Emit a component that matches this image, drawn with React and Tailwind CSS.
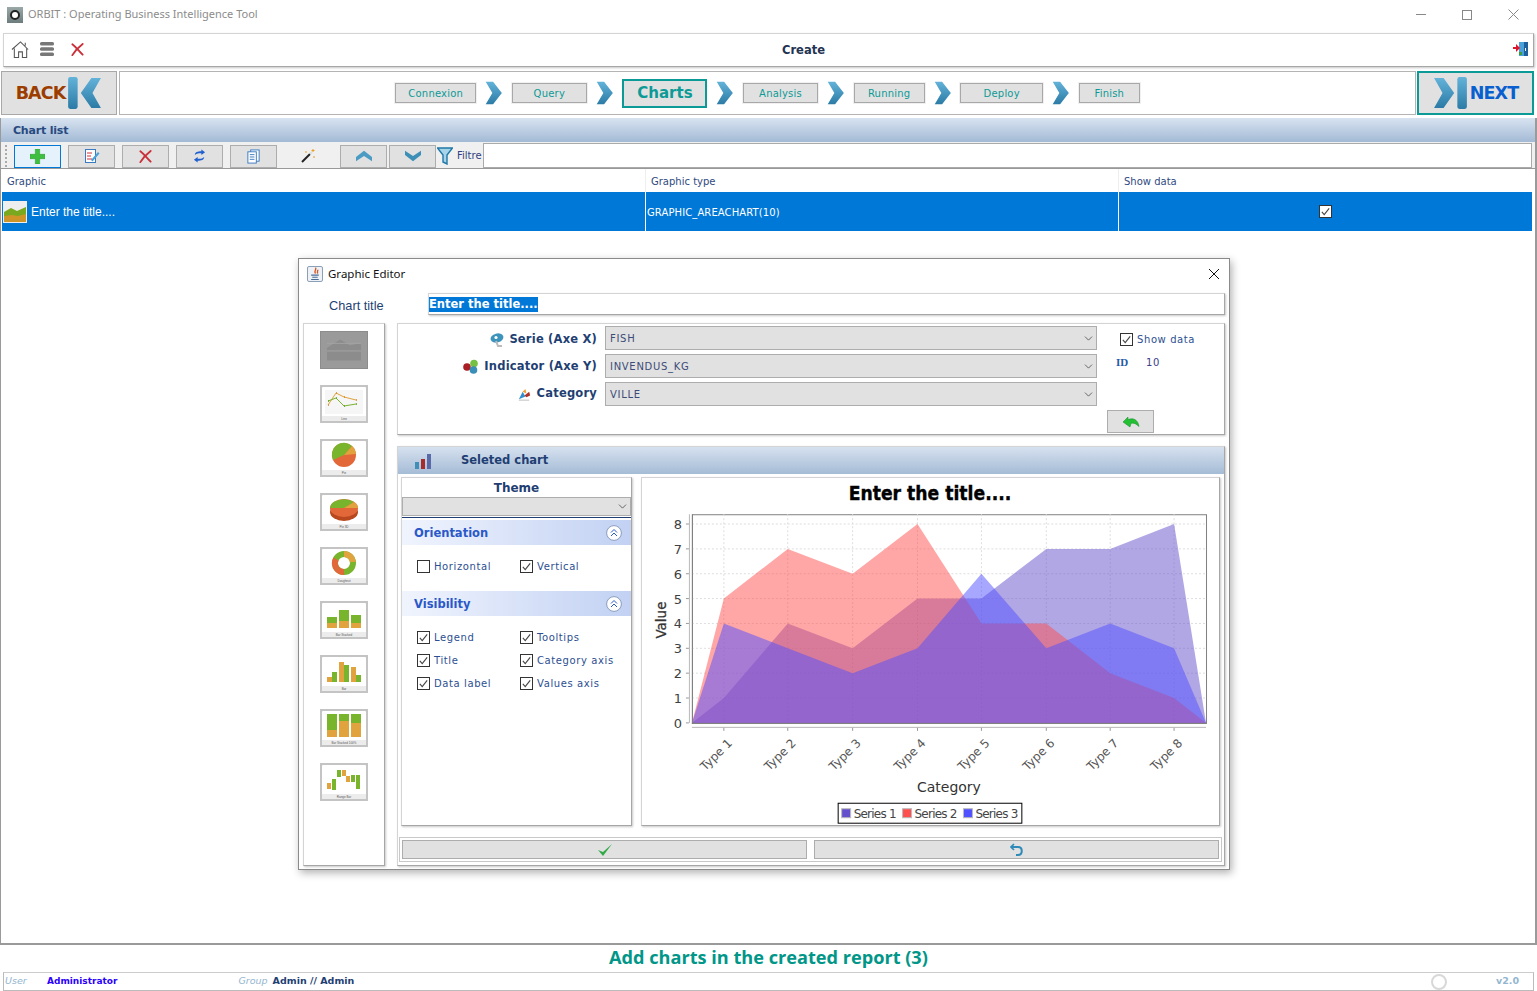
import { ChevronDown } from 'lucide-react';

const VERDANA = "font-['DejaVu_Sans',sans-serif]";

const Raised = ({ className = '', children }) => (
  <div className={`bg-white border border-[#d4d4d4] border-r-[#a6a6a6] border-b-[#a6a6a6] shadow-[1px_1px_2px_rgba(0,0,0,0.22)] ${className}`}>
    {children}
  </div>
);

const Chevron = ({ left = false, bar = false, className = '' }) => (
  <svg viewBox={bar ? '0 0 34 30' : '7 0 24 30'} preserveAspectRatio="none" className={className}>
    <g transform={left ? 'matrix(-1 0 0 1 34 0)' : undefined}>
      <path d={bar ? 'M1 1h9l10 14-10 14H1l8-14z' : 'M8 1h10l12 14-12 14H8l9-14z'} fill="url(#chev)" />
      {bar && <rect x="23" y="0" width="9" height="30" rx="2" fill="url(#chev)" />}
    </g>
  </svg>
);

const RedCross = ({ className = 'w-4 h-4' }) => (
  <svg viewBox="0 0 16 16" className={className}>
    <path d="M2.5 2.5c4 3 7 7 11 11M13.5 2c-4 3-8 7-11 12" fill="none" stroke="#c9303a" strokeWidth="2" strokeLinecap="round" />
  </svg>
);

const StepBox = ({ label }) => (
  <div className={`h-[20px] flex items-center justify-center border border-[#a8a8a8] bg-[#e1e1e1] outline outline-1 outline-[#f0f0f0] text-[10px] tracking-[0.2px] text-[#0c9a96] ${VERDANA}`}>
    {label}
  </div>
);

const ToolBtn = ({ children, active = false, flat = false }) => (
  <div className={`w-[47px] h-[23px] flex items-center justify-center border ${active ? 'border-[#0078d7] bg-[#e5f1fb]' : flat ? 'border-transparent' : 'border-[#adadad] bg-[#e1e1e1]'}`}>
    {children}
  </div>
);

const Check = ({ checked = true, label, className = '' }) => (
  <div className={`flex items-center gap-[4px] ${className}`}>
    <span className="w-[13px] h-[13px] border border-[#333] bg-white flex items-center justify-center shrink-0">
      {checked && (
        <svg viewBox="0 0 12 12" className="w-[11px] h-[11px]">
          <path d="M2 6.5l2.6 3L10 2.5" fill="none" stroke="#444" strokeWidth="1.2" />
        </svg>
      )}
    </span>
    {label && <span className={`text-[10px] tracking-[0.6px] text-[#2c4f92] ${VERDANA}`}>{label}</span>}
  </div>
);

const Combo = ({ value, className = '' }) => (
  <div className={`flex items-center justify-between bg-[#e1e1e1] border border-[#adadad] pl-[4px] pr-[1px] text-[10px] tracking-[0.7px] text-[#3c4c78] ${VERDANA} ${className}`}>
    <span>{value}</span>
    <ChevronDown size={13} strokeWidth={1.3} className="text-[#333]" />
  </div>
);

const AccordionHead = ({ title }) => (
  <div className="h-[25px] flex items-center justify-between pl-[12px] pr-[9px] bg-gradient-to-r from-[#f0f4fd] to-[#c2d1f3]">
    <span className={`pt-[3px] text-[11.5px] font-bold text-[#2a58c8] ${VERDANA}`}>{title}</span>
    <svg viewBox="0 0 16 16" className="w-[16px] h-[16px]">
      <circle cx="8" cy="8" r="7.4" fill="#fff" stroke="#8a9cc0" />
      <path d="M5 7.5l3-3 3 3M5 11l3-3 3 3" fill="none" stroke="#2a58c8" />
    </svg>
  </div>
);

const Frame = ({ label, children }) => (
  <svg viewBox="0 0 48 38" className="w-[48px] h-[38px] block">
    <rect x="0" y="0" width="48" height="38" fill="#c4c4c4" />
    <rect x="2" y="2" width="44" height="34" rx="1" fill="#fff" />
    <rect x="2" y="31" width="44" height="5" fill="#ececec" />
    <text x="24" y="35" textAnchor="middle" fontSize="3" fill="#555" fontFamily="Liberation Sans">{label}</text>
    {children}
  </svg>
);

const barsG = '#79b42d';
const barsO = '#e0a33d';

const thumbs = [
  {
    label: 'Line',
    art: (
      <>
        <rect x="5" y="5" width="38" height="24" fill="#f6f6f6" />
        <path d="M8 20l8-12 8 4 12 3" fill="none" stroke="#e0a33d" />
        <path d="M8 16l8-3 8 8 12-2" fill="none" stroke="#79b42d" />
        <path d="M8 20h1M16 8h1M24 12h1M36 15h1" stroke="#d08a20" strokeWidth="1.5" />
        <path d="M8 16h1M16 13h1M24 21h1M36 19h1" stroke="#5d9a20" strokeWidth="1.5" />
      </>
    ),
  },
  {
    label: 'Pie',
    art: (
      <>
        <circle cx="24" cy="16" r="12" fill="#e2683a" />
        <path d="M24 16L13 21A12 12 0 0 1 32 7z" fill={barsG} />
        <path d="M24 16L32 7A12 12 0 0 1 36 15z" fill={barsO} />
      </>
    ),
  },
  {
    label: 'Pie 3D',
    art: (
      <>
        <ellipse cx="24" cy="19" rx="14" ry="9" fill="#b9481f" />
        <ellipse cx="24" cy="15" rx="14" ry="9" fill="#e2683a" />
        <path d="M24 15L10 15A14 9 0 0 1 34 9z" fill={barsG} />
        <path d="M24 15L34 9A14 9 0 0 1 38 15z" fill={barsO} />
      </>
    ),
  },
  {
    label: 'Doughnut',
    art: (
      <>
        <circle cx="24" cy="16" r="9" fill="none" stroke={barsG} strokeWidth="6" />
        <path d="M24 7A9 9 0 0 1 33 15" fill="none" stroke={barsO} strokeWidth="6" />
        <path d="M17 22A9 9 0 0 1 16 12" fill="none" stroke="#e2683a" strokeWidth="6" />
        <path d="M24 25A9 9 0 0 1 17 22" fill="none" stroke="#e2683a" strokeWidth="6" />
      </>
    ),
  },
  {
    label: 'Bar Stacked',
    art: (
      <>
        <rect x="7" y="16" width="10" height="6" fill={barsG} /><rect x="7" y="22" width="10" height="5" fill={barsO} />
        <rect x="19" y="9" width="10" height="11" fill={barsG} /><rect x="19" y="20" width="10" height="7" fill={barsO} />
        <rect x="31" y="14" width="10" height="8" fill={barsG} /><rect x="31" y="22" width="10" height="5" fill={barsO} />
      </>
    ),
  },
  {
    label: 'Bar',
    art: (
      <>
        <rect x="7" y="22" width="5" height="5" fill={barsO} /><rect x="12" y="17" width="5" height="10" fill={barsG} />
        <rect x="19" y="7" width="5" height="20" fill={barsO} /><rect x="24" y="10" width="5" height="17" fill={barsG} />
        <rect x="31" y="12" width="5" height="15" fill={barsO} /><rect x="36" y="20" width="5" height="7" fill={barsG} />
      </>
    ),
  },
  {
    label: 'Bar Stacked 100%',
    art: (
      <>
        <rect x="7" y="5" width="10" height="16" fill={barsG} /><rect x="7" y="21" width="10" height="7" fill={barsO} />
        <rect x="19" y="5" width="10" height="7" fill={barsG} /><rect x="19" y="12" width="10" height="16" fill={barsO} />
        <rect x="31" y="5" width="10" height="9" fill={barsG} /><rect x="31" y="14" width="10" height="14" fill={barsO} />
      </>
    ),
  },
  {
    label: 'Range Bar',
    art: (
      <>
        <rect x="7" y="20" width="4" height="6" fill={barsO} /><rect x="12" y="16" width="4" height="11" fill={barsG} />
        <rect x="17" y="7" width="4" height="7" fill={barsG} /><rect x="22" y="7" width="4" height="6" fill={barsO} />
        <rect x="26" y="13" width="4" height="6" fill={barsO} /><rect x="31" y="12" width="4" height="7" fill={barsG} />
        <rect x="36" y="12" width="4" height="14" fill={barsG} />
      </>
    ),
  },
];

const X_POS = [724, 788, 853, 918, 982, 1047, 1111, 1175];
const Y0 = 723;
const STEP = 24.9;
const series = [
  { color: '#6450cc', vals: [1, 4, 3, 5, 5, 7, 7, 8] },
  { color: '#ff5050', vals: [5, 7, 6, 8, 4, 4, 2, 1] },
  { color: '#5050ff', vals: [4, 3, 2, 3, 6, 3, 4, 3] },
];

const areaPoints = (vals) =>
  [`692,${Y0}`, ...vals.map((v, i) => `${X_POS[i]},${Y0 - v * STEP}`), `1207,${Y0}`].join(' ');

const Chart = () => (
  <svg viewBox="642 478 578 347" className="w-full h-full block">
    <text x="930.5" y="500" textAnchor="middle" fontSize="20" fontWeight="700" fontFamily="DejaVu Sans" stroke="#000" strokeWidth="0.4" textLength="163" lengthAdjust="spacingAndGlyphs">
      Enter the title....
    </text>
    <rect x="692.5" y="514.5" width="515" height="209" fill="#fff" stroke="#808080" />
    {[1, 2, 3, 4, 5, 6, 7, 8].map((v) => (
      <line key={v} x1="692" x2="1207" y1={Y0 - v * STEP} y2={Y0 - v * STEP} stroke="#ddd" strokeDasharray="2 2" />
    ))}
    {X_POS.map((x) => (
      <line key={x} x1={x} x2={x} y1="514" y2="723" stroke="#ddd" strokeDasharray="2 2" />
    ))}
    {series.map((s) => (
      <polygon key={s.color} points={areaPoints(s.vals)} fill={s.color} fillOpacity="0.5" />
    ))}
    <line x1="692.5" x2="692.5" y1="514" y2="724" stroke="#808080" />
    <line x1="692" x2="1207" y1="723.5" y2="723.5" stroke="#808080" />
    <line x1="692" x2="1207" y1="727.5" y2="727.5" stroke="#b8b8b8" />
    <line x1="689.5" x2="689.5" y1="514" y2="723" stroke="#b8b8b8" />
    {[0, 1, 2, 3, 4, 5, 6, 7, 8].map((v) => (
      <g key={v}>
        <line x1="686" x2="689" y1={Y0 - v * STEP} y2={Y0 - v * STEP} stroke="#999" />
        <text x="682" y={Y0 - v * STEP + 5} textAnchor="end" fontSize="13" fill="#404040" fontFamily="DejaVu Sans">{v}</text>
      </g>
    ))}
    {X_POS.map((x, i) => (
      <g key={x}>
        <line x1={x} x2={x} y1="728" y2="731" stroke="#999" />
        <text x={x + 9} y="744" textAnchor="end" fontSize="12" fill="#555" fontFamily="DejaVu Sans" transform={`rotate(-45 ${x + 9} 744)`}>
          Type {i + 1}
        </text>
      </g>
    ))}
    <text transform="translate(666 620) rotate(-90)" textAnchor="middle" fontSize="13.5" fill="#333" stroke="#333" strokeWidth="0.3" fontFamily="DejaVu Sans">Value</text>
    <text x="949.5" y="792" textAnchor="middle" fontSize="14" fill="#333" fontFamily="DejaVu Sans">Category</text>
    <rect x="838.5" y="803.5" width="184" height="20" fill="#fff" stroke="#000" />
    {[['Series 1', 842, '#6450cc'], ['Series 2', 903, '#ff5050'], ['Series 3', 964, '#5050ff']].map(([t, x, c]) => (
      <g key={t}>
        <rect x={x} y="809" width="9" height="9" fill={c} stroke="#bbb" />
        <text x={x + 12} y="818" fontSize="12" fill="#444" fontFamily="DejaVu Sans" textLength="43">{t}</text>
      </g>
    ))}
  </svg>
);

const GraphicEditor = () => (
  <div className="absolute left-[298px] top-[258px] w-[932px] h-[612px] bg-white border border-[#8a8a8a] shadow-[2px_3px_8px_rgba(0,0,0,0.3)] flex flex-col">
    <div className="h-[29px] shrink-0 flex items-center pl-[8px] pr-[9px]">
      <span className="w-[16px] h-[16px] border border-[#8aa0b8] rounded-[2px] bg-[#eef2f6] flex items-center justify-center mr-[5px]">
        <svg viewBox="0 0 12 12" className="w-[13px] h-[13px]">
          <path d="M6 0.5c1.5 2-2 3 0 5.5M8.2 2.5c0 1.2-1.2 2 0 3.5" fill="none" stroke="#d9531e" strokeWidth="1.2" />
          <path d="M2 7.5h7M3 9.5h5M2 11.5h7" stroke="#4a6d96" fill="none" />
        </svg>
      </span>
      <span className="font-['Noto_Sans',sans-serif] text-[11.5px] text-[#111]">Graphic Editor</span>
      <svg viewBox="0 0 12 12" className="w-[12px] h-[12px] ml-auto">
        <path d="M1 1l10 10M11 1L1 11" stroke="#111" strokeWidth="1" />
      </svg>
    </div>
    <div className="h-[35px] shrink-0 flex items-start pt-[5px]">
      <span className="w-[129px] pl-[30px] pt-[3px] font-['Liberation_Sans',sans-serif] text-[12.75px] text-[#1f3f73]">Chart title</span>
      <Raised className="w-[797px] h-[22px] flex items-center">
        <span className={`bg-[#0078d7] text-white text-[11.5px] font-bold leading-[15px] ${VERDANA}`}>Enter the title....</span>
      </Raised>
    </div>
    <div className="flex-1 flex pl-[4px] pr-[4px] pb-[3px] gap-[12px] min-h-0">
      <Raised className="w-[82px] shrink-0 flex flex-col items-center pt-[7px] gap-[16px]">
        <div className="w-[48px] h-[38px] bg-[#9a9a9a] border border-[#8c8c8c] flex items-center justify-center">
          <svg viewBox="0 0 48 38" className="w-[46px] h-[36px]">
            <path d="M6 30V17l14-9 10 6 12-2v18z" fill="#8c8c8c" />
            <path d="M6 12h36M6 20h36" stroke="#a4a4a4" fill="none" />
          </svg>
        </div>
        {thumbs.map((t) => (
          <Frame key={t.label} label={t.label}>{t.art}</Frame>
        ))}
      </Raised>
      <div className="flex-1 flex flex-col gap-[11px] min-w-0">
        <Raised className="h-[112px] shrink-0 flex">
          <div className="w-[207px] shrink-0 flex flex-col pt-[4px] gap-[3px] items-end pr-[8px]">
            {[['Serie (Axe X)', 'serie'], ['Indicator (Axe Y)', 'ind'], ['Category', 'cat']].map(([t, k]) => (
              <div key={k} className="h-[24px] flex items-center gap-[5px]">
                {k === 'serie' && (
                  <svg viewBox="0 0 14 16" className="w-[14px] h-[16px]">
                    <ellipse cx="7" cy="6" rx="6.5" ry="4.5" fill="#3c94bd" transform="rotate(-15 7 6)" />
                    <circle cx="6" cy="5.5" r="1.6" fill="#fff" />
                    <path d="M6 9l2 5h4" stroke="#bbb" strokeWidth="2" fill="none" />
                  </svg>
                )}
                {k === 'ind' && (
                  <svg viewBox="0 0 16 16" className="w-[16px] h-[16px]">
                    <circle cx="4" cy="8" r="3.8" fill="#a91f24" />
                    <circle cx="11" cy="4.5" r="3.8" fill="#76c043" />
                    <circle cx="10.5" cy="11" r="3.8" fill="#3a8fb8" />
                  </svg>
                )}
                {k === 'cat' && (
                  <svg viewBox="0 0 16 16" className="w-[15px] h-[15px]">
                    <path d="M2 13l4-8 3 5z" fill="#2f8fd0" />
                    <path d="M6 5l3-3 1 5z" fill="#f0a030" />
                    <path d="M8 9l5-4 1 4-4 2z" fill="#b0302a" />
                    <path d="M2 14h11" stroke="#bbb" />
                  </svg>
                )}
                <span className={`text-[11.5px] tracking-[0.2px] font-bold text-[#1f3f73] ${VERDANA}`}>{t}</span>
              </div>
            ))}
          </div>
          <div className="w-[492px] shrink-0 flex flex-col pt-[2px] gap-[4px]">
            <Combo value="FISH" className="h-[24px]" />
            <Combo value="INVENDUS_KG" className="h-[24px]" />
            <Combo value="VILLE" className="h-[24px]" />
          </div>
          <div className="flex-1 flex flex-col pl-[10px]">
            <Check label="Show data" className="pl-[13px] pt-[8px]" />
            <div className="flex items-center mt-[7px] pl-[9px] text-[10px]">
              <span className="font-['Liberation_Serif',serif] font-bold text-[11px] text-[#1f5aa8] w-[30px]">ID</span>
              <span className={`tracking-[0.7px] text-[#3c3c88] ${VERDANA}`}>10</span>
            </div>
            <div className="mt-[39px] w-[47px] h-[23px] border border-[#adadad] bg-[#e1e1e1] flex items-center justify-center">
              <svg viewBox="0 0 18 14" className="w-[18px] h-[14px]">
                <path d="M1 8l5-5v2.5c5-2 10 0 11 7-3-3-6-4-8-3l-1 3.5z" fill="#22c032" stroke="#13862a" strokeWidth="0.5" />
              </svg>
            </div>
          </div>
        </Raised>
        <Raised className="flex-1 min-h-0 flex flex-col bg-white">
          <div className="h-[27px] shrink-0 flex items-center pl-[16px] bg-gradient-to-b from-[#d6e1ef] to-[#a5bcd6]">
            <svg viewBox="0 0 18 16" className="w-[18px] h-[16px]">
              <rect x="1" y="9" width="4" height="7" fill="#3f8fb8" />
              <rect x="7" y="6" width="4" height="10" fill="#a92a2a" />
              <rect x="13" y="1" width="4" height="15" fill="#5a6aa8" />
            </svg>
            <span className={`ml-[29px] text-[11.5px] font-bold text-[#1f3f73] ${VERDANA}`}>Seleted chart</span>
          </div>
          <div className="flex pl-[3px] pr-[4px] pt-[3px] gap-[9px]">
            <Raised className="w-[231px] h-[349px] shrink-0">
              <div className={`h-[19px] pt-[1px] text-center text-[12px] font-bold text-[#1f3f73] leading-[19px] ${VERDANA}`}>Theme</div>
              <Combo value="" className="h-[19px] border-[#a0a0a0]" />
              <div className="h-[1px] mt-[1px] bg-[#1f3f73]" />
              <div className="mt-[2px]"><AccordionHead title="Orientation" /></div>
              <div className="grid grid-cols-[103px_1fr] pl-[15px] pt-[14px] h-[46px] items-start">
                <Check checked={false} label="Horizontal" />
                <Check label="Vertical" />
              </div>
              <AccordionHead title="Visibility" />
              <div className="grid grid-cols-[103px_1fr] pl-[15px] pt-[14px] gap-y-[8px]">
                <Check label="Legend" />
                <Check label="Tooltips" />
                <Check label="Title" />
                <Check label="Category axis" />
                <Check label="Data label" />
                <Check label="Values axis" />
              </div>
            </Raised>
            <Raised className="w-[580px] h-[349px]">
              <Chart />
            </Raised>
          </div>
          <div className="mt-[11px] ml-[1px] mr-[2px] h-[25px] border border-[#c8c8c8] flex items-center gap-[7px] px-[2px]">
            <div className="flex-1 h-[19px] bg-[#e1e1e1] border border-[#adadad] flex items-center justify-center">
              <svg viewBox="0 0 16 14" className="w-[16px] h-[14px]">
                <path d="M1 7l5 6L15 1 6 9z" fill="#33aa4a" />
              </svg>
            </div>
            <div className="flex-1 h-[19px] bg-[#e1e1e1] border border-[#adadad] flex items-center justify-center">
              <svg viewBox="0 0 14 14" className="w-[14px] h-[14px]">
                <path d="M4 1L1 4l3 3" fill="none" stroke="#2e8ab8" strokeWidth="1.6" />
                <path d="M2 4h6c5 0 5 8 0 8H6" fill="none" stroke="#2e8ab8" strokeWidth="2" />
              </svg>
            </div>
          </div>
        </Raised>
      </div>
    </div>
  </div>
);

export default function App() {
  const steps = [
    ['Connexion', 'w-[81px]'],
    ['Query', 'w-[75px]'],
    ['Charts', 'w-[85px]'],
    ['Analysis', 'w-[75px]'],
    ['Running', 'w-[71px]'],
    ['Deploy', 'w-[83px]'],
    ['Finish', 'w-[61px]'],
  ];

  return (
    <div className="relative w-[1537px] h-[991px] overflow-hidden bg-white flex flex-col font-['Liberation_Sans',sans-serif]">
      <svg className="absolute w-0 h-0">
        <defs>
          <linearGradient id="chev" x1="0" y1="0" x2="0" y2="1">
            <stop offset="0" stopColor="#63b2d9" />
            <stop offset="1" stopColor="#2b7ba6" />
          </linearGradient>
        </defs>
      </svg>

      {/* title bar */}
      <div className="h-[32px] shrink-0 flex items-center pl-[7px] pb-[3px]">
        <span className="w-[16px] h-[16px] bg-gradient-to-b from-[#9aa8a8] to-[#6d7c7c] flex items-center justify-center">
          <span className="w-[10px] h-[10px] rounded-full border-2 border-[#222] bg-white" />
        </span>
        <span className="ml-[5px] font-['Noto_Sans',sans-serif] text-[11px] text-[#8c8c8c]">ORBIT : Operating Business Intelligence Tool</span>
        <div className="ml-auto flex items-center pr-[18px] gap-[36px]">
          <span className="w-[10px] h-[1px] bg-[#888]" />
          <span className="w-[10px] h-[10px] border border-[#888]" />
          <svg viewBox="0 0 11 11" className="w-[11px] h-[11px]">
            <path d="M0.5 0.5l10 10M10.5 0.5l-10 10" stroke="#888" />
          </svg>
        </div>
      </div>

      {/* top toolbar */}
      <Raised className="h-[34px] mx-[3px] mt-[1px] shrink-0 grid grid-cols-[778px_auto_1fr] items-center border-[#c4c4c4]">
        <div className="flex items-center pl-[7px] pb-[2px] gap-[9px]">
          <svg viewBox="0 0 20 20" className="w-[19px] h-[19px]">
            <path d="M1 10l9-8 8 8M3.5 9v9.5h4.5v-6h4v6h4.5V9M15 3v3" fill="none" stroke="#555" strokeWidth="1.1" />
          </svg>
          <svg viewBox="0 0 16 16" className="w-[16px] h-[16px]">
            <rect x="1" y="1" width="14" height="3.5" rx="1.5" fill="#777" />
            <rect x="1" y="6.3" width="14" height="3.5" rx="1.5" fill="#777" />
            <rect x="1" y="11.5" width="14" height="3.5" rx="1.5" fill="#777" />
          </svg>
          <RedCross className="w-[15px] h-[15px] ml-[6px]" />
        </div>
        <span className={`pt-[1px] text-[11.5px] font-bold text-[#1f3352] ${VERDANA}`}>Create</span>
        <div className="flex justify-end pr-[4px] pb-[2px]">
          <svg viewBox="0 0 16 16" className="w-[16px] h-[16px]">
            <rect x="6" y="1" width="9" height="14" fill="#1e5f9e" />
            <rect x="6" y="1" width="5" height="14" fill="#4aa0d8" />
            <rect x="12" y="7" width="1" height="3" fill="#fff" />
            <path d="M0 6h3V3l4 4-4 4V8H0z" fill="#e0142d" />
            <rect x="6" y="11" width="3" height="3" fill="#3f9e3f" />
          </svg>
        </div>
      </Raised>

      {/* wizard row */}
      <div className="h-[44px] mt-[4px] ml-[1px] mr-[3px] shrink-0 flex">
        <div className="w-[116px] shrink-0 bg-[#e1e1e1] border border-[#a8a8a8] flex items-center justify-center gap-[1px]">
          <span className={`text-[17.5px] font-bold text-[#9c3d00] ${VERDANA} tracking-[-0.9px]`}>BACK</span>
          <Chevron left bar className="w-[36px] h-[32px]" />
        </div>
        <div className="flex-1 ml-[2px] mr-[1px] border border-[#b4b4b4] flex items-center justify-center gap-[9px]">
          {steps.map(([label, w], i) => (
            <div key={label} className="flex items-center gap-[9px]">
              {label === 'Charts' ? (
                <div className={`${w} h-[29px] flex items-center justify-center border-2 border-[#0c9a96] bg-[#e1e1e1] text-[15px] font-bold text-[#0c9a96] ${VERDANA}`}>
                  {label}
                </div>
              ) : (
                <div className={w}><StepBox label={label} /></div>
              )}
              {i < steps.length - 1 && <Chevron className="w-[17.6px] h-[24px]" />}
            </div>
          ))}
        </div>
        <div className="w-[117px] shrink-0 bg-[#e1e1e1] border-2 border-[#0c9a96] flex items-center justify-center gap-[1px]">
          <Chevron bar className="w-[36px] h-[32px]" />
          <span className={`text-[17.5px] font-bold text-[#0a5fd0] ${VERDANA} tracking-[-0.9px]`}>NEXT</span>
        </div>
      </div>

      {/* main panel */}
      <div className="h-[827px] mt-[3px] shrink-0 flex flex-col border-b-2 border-[#9a9a9a] border-l border-l-[#9a9a9a] border-r-2 border-r-[#9a9a9a]">
        <div className={`h-[24px] shrink-0 flex items-center pl-[12px] pt-[3px] bg-gradient-to-b from-[#d8e3f0] to-[#a3bad5] text-[11px] tracking-[-0.2px] font-bold text-[#274a80] ${VERDANA}`}>
          Chart list
        </div>
        <div className="h-[27px] shrink-0 flex items-center bg-[#f0f0f0] border-b border-[#999] pl-[4px] pt-[2px]">
          <span className="w-[2px] h-[22px] border-l-2 border-dotted border-[#aaa] mr-[7px]" />
          <div className="flex items-center gap-[7px]">
            <ToolBtn active>
              <svg viewBox="0 0 14 14" className="w-[15px] h-[15px]">
                <path d="M5 0h4v5h5v4H9v5H5V9H0V5h5z" fill="#3fbf3f" stroke="#2a9a2a" strokeWidth="0.5" />
              </svg>
            </ToolBtn>
            <ToolBtn>
              <svg viewBox="0 0 16 16" className="w-[16px] h-[16px]">
                <rect x="1.5" y="1.5" width="10" height="13" fill="#fff" stroke="#3a7ac0" />
                <path d="M3 5h5M3 8h4M3 11h5" stroke="#d0303a" />
                <path d="M7 12l7-8 1.5 1.5-7 8z" fill="#4aa0d8" />
              </svg>
            </ToolBtn>
            <ToolBtn><RedCross className="w-[15px] h-[15px]" /></ToolBtn>
            <ToolBtn>
              <svg viewBox="0 0 14 16" className="w-[13px] h-[16px]">
                <path d="M2 7c0-3 3-4 7-4V1l4 3-4 3V5C6 5 4 5 2 7zM12 9c0 3-3 4-7 4v2l-4-3 4-3v2c3 0 5 0 7-2z" fill="#1f5fd0" />
              </svg>
            </ToolBtn>
            <ToolBtn>
              <svg viewBox="0 0 16 16" className="w-[15px] h-[15px]">
                <rect x="5" y="1" width="9" height="12" fill="#fff" stroke="#3a7ac0" />
                <rect x="2" y="3" width="9" height="12" fill="#fff" stroke="#3a7ac0" />
                <path d="M4 6h5M4 8.5h5M4 11h5" stroke="#3a7ac0" />
              </svg>
            </ToolBtn>
            <ToolBtn flat>
              <svg viewBox="0 0 16 16" className="w-[16px] h-[16px]">
                <path d="M2 14l8-8" stroke="#222" strokeWidth="2" />
                <path d="M10 6l2-2" stroke="#ddd" strokeWidth="2" />
                <path d="M13 1v3M11.5 2.5h3M6 3v2M14 8v2" stroke="#e8a020" />
              </svg>
            </ToolBtn>
          </div>
          <div className="flex items-center gap-[2px] ml-[9px]">
            <ToolBtn>
              <svg viewBox="0 0 18 12" className="w-[16px] h-[12px]">
                <path d="M0 7l9-7 9 7v5l-9-6-9 6z" fill="#4a9cc4" />
              </svg>
            </ToolBtn>
            <ToolBtn>
              <svg viewBox="0 0 18 12" className="w-[16px] h-[12px]">
                <path d="M0 0l9 6 9-6v5l-9 7-9-7z" fill="#3d8fb8" />
              </svg>
            </ToolBtn>
          </div>
          <svg viewBox="0 0 16 18" className="w-[16px] h-[18px] ml-[1px]">
            <path d="M0.5 1h15l-5.5 7v9l-4-2V8z" fill="#a8d4ea" stroke="#1f78a6" strokeWidth="1.4" />
          </svg>
          <span className={`ml-[4px] -mt-[2px] text-[10px] text-[#2f3f80] ${VERDANA}`}>Filtre</span>
          <input readOnly className="ml-[1px] flex-1 h-[25px] -mt-[2px] mr-[3px] bg-white border border-[#aaa] outline-none" />
        </div>
        <div className="flex-1 relative pl-[1px] pr-[3px]">
          <div className={`h-[23px] grid grid-cols-[644px_473px_1fr] text-[10px] text-[#2f4a80] ${VERDANA}`}>
            <div className="flex items-center pl-[5px] pt-[2px] border-r border-[#eee]">Graphic</div>
            <div className="flex items-center pl-[5px] pt-[2px] border-r border-[#eee]">Graphic type</div>
            <div className="flex items-center pl-[5px] pt-[2px]">Show data</div>
          </div>
          <div className="h-[39px] bg-[#0078d7] grid grid-cols-[644px_473px_1fr] text-white">
            <div className="flex items-center border-r border-white pl-[1px] gap-[4px] text-[12px]">
              <svg viewBox="0 0 24 22" className="w-[24px] h-[22px]">
                <rect width="24" height="22" fill="#eee" />
                <path d="M1 11l7-4 6 3 9-4v15H1z" fill="#7aa81e" />
                <path d="M1 15l8-1 6 1 8-2v8H1z" fill="#cf9528" />
              </svg>
              <span>Enter the title....</span>
            </div>
            <div className="flex items-center border-r border-white pl-[1px] pt-[1px] text-[10px] tracking-[0.1px]">
              <span className={VERDANA}>GRAPHIC_AREACHART(10)</span>
            </div>
            <div className="flex items-center justify-center">
              <Check />
            </div>
          </div>
        </div>
      </div>

      {/* status message */}
      <div className="h-[26px] shrink-0 text-center text-[18.15px] leading-[24px] font-bold text-[#009688] font-['Open_Sans',sans-serif]">
        Add charts in the created report (3)
      </div>

      {/* status bar */}
      <div className={`h-[19px] mt-[1px] mx-[3px] shrink-0 border border-[#bbb] border-t-[#ccc] flex items-center text-[9.5px] font-bold ${VERDANA}`}>
        <span className="w-[43px] pl-[1px] italic font-normal text-[#93b6d0]">User</span>
        <span className="text-[9px] text-[#2a00ff]">Administrator</span>
        <span className="ml-[121px] italic font-normal text-[#93b6d0]">Group</span>
        <span className="ml-[5px] -mt-[1px] text-[#1f3f73]">Admin // Admin</span>
        <span className="ml-auto w-[16px] h-[16px] rounded-full border-2 border-[#d8d8d8]" />
        <span className="ml-[49px] mr-[14px] text-[#93b6d0]">v2.0</span>
      </div>

      <GraphicEditor />
    </div>
  );
}
